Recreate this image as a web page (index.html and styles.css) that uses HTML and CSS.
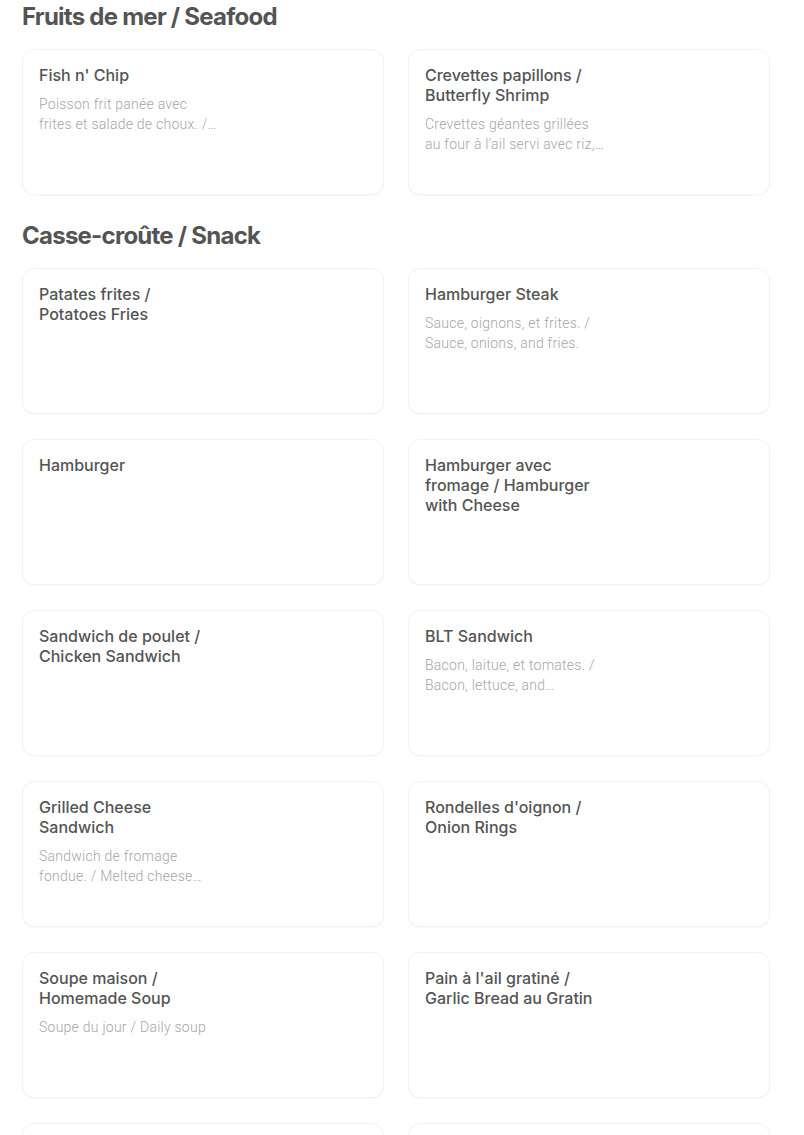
FILE: index.html
```html
<!DOCTYPE html>
<html lang="fr">
<head>
<meta charset="utf-8">
<title>Menu</title>
<link rel="stylesheet" href="styles.css">
</head>
<body>
<main class="menu">
  <section class="section">
    <h2 class="section-title">Fruits de mer / Seafood</h2>
    <div class="grid">
      <div class="card"><div class="name">Fish n' Chip</div><div class="desc">Poisson frit panée avec frites et salade de choux. /…</div></div>
      <div class="card"><div class="name">Crevettes papillons / Butterfly Shrimp</div><div class="desc">Crevettes géantes grillées au four à l'ail servi avec riz,…</div></div>
    </div>
  </section>
  <section class="section">
    <h2 class="section-title">Casse-croûte / Snack</h2>
    <div class="grid">
      <div class="card"><div class="name">Patates frites / Potatoes Fries</div></div>
      <div class="card"><div class="name">Hamburger Steak</div><div class="desc">Sauce, oignons, et frites. / Sauce, onions, and fries.</div></div>
      <div class="card"><div class="name">Hamburger</div></div>
      <div class="card"><div class="name">Hamburger avec fromage / Hamburger with Cheese</div></div>
      <div class="card"><div class="name">Sandwich de poulet / Chicken Sandwich</div></div>
      <div class="card"><div class="name">BLT Sandwich</div><div class="desc">Bacon, laitue, et tomates. / Bacon, lettuce, and…</div></div>
      <div class="card"><div class="name">Grilled Cheese Sandwich</div><div class="desc">Sandwich de fromage fondue. / Melted cheese…</div></div>
      <div class="card"><div class="name">Rondelles d'oignon / Onion Rings</div></div>
      <div class="card"><div class="name">Soupe maison / Homemade Soup</div><div class="desc">Soupe du jour / Daily soup</div></div>
      <div class="card"><div class="name">Pain à l'ail gratiné / Garlic Bread au Gratin</div></div>
      <div class="card"></div>
      <div class="card"></div>
    </div>
  </section>
</main>
</body>
</html>
```
FILE: styles.css
```css
html, body {
  margin: 0;
  padding: 0;
  background: #ffffff;
}
body {
  font-family: "Inter", "Liberation Sans", sans-serif;
  color: #545454;
}
.menu {
  padding: 1px 34px 0 22px;
}
.section {
  margin-bottom: 25px;
}
.section-title {
  margin: 0 0 16px 0;
  font-size: 24px;
  line-height: 32px;
  font-weight: 700;
  letter-spacing: -0.75px;
  color: #545454;
}
.grid {
  display: grid;
  grid-template-columns: 362px 362px;
  column-gap: 24px;
  row-gap: 25px;
}
.card {
  box-sizing: border-box;
  height: 146px;
  border: 1px solid #f2f2f2;
  border-radius: 12px;
  box-shadow: 0 1px 1px rgba(0,0,0,0.03);
  padding: 15px 16px;
  background: #fff;
}
.name {
  width: 176px;
  font-size: 16px;
  line-height: 20px;
  font-weight: 500;
  color: #545454;
}
.desc {
  width: 180px;
  margin-top: 9px;
  font-family: "Roboto", "Liberation Sans", sans-serif;
  font-size: 14px;
  line-height: 20px;
  font-weight: 300;
  letter-spacing: 0.25px;
  color: #a6a6a6;
}
```
